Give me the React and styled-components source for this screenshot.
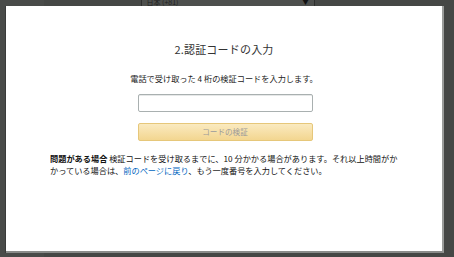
import React from "react";
import styled, { createGlobalStyle } from "styled-components";

const Global = createGlobalStyle`
  html, body { margin: 0; padding: 0; }
  body {
    background: #474947;
    overflow: hidden;
    font-family: "Noto Sans CJK JP", "Noto Sans", sans-serif;
  }
`;

const Screen = styled.div`
  position: relative;
  width: 454px;
  height: 257px;
  overflow: hidden;
  background: linear-gradient(to right, #494b49 0 44px, #454745 44px);
`;

const BehindPage = styled.div`
  display: flex;
  justify-content: center;
  padding-left: 1px;
`;

const FakeSelect = styled.div`
  width: 174px;
  height: 14px;
  margin-top: -7px;
  border: 1px solid #2e2f2e;
  border-top: none;
  background: #4d4f4d;
  display: flex;
  align-items: flex-end;
  justify-content: space-between;
  padding: 0 5px 0 5px;
  box-sizing: border-box;
  font-size: 7px;
  color: #222;
  line-height: 1;
`;

const Arrow = styled.span`
  font-size: 6px;
  color: #111;
  margin-bottom: 1px;
`;

const Modal = styled.div`
  position: absolute;
  left: 6px;
  top: 6px;
  width: 436px;
  height: 245px;
  background: #fff;
  border-right: 2px solid #9a9c9a;
  border-bottom: 2px solid #8a8c8a;
  box-shadow: -1px 0 0 #3a3b3a;
  display: flex;
  flex-direction: column;
  align-items: center;
  box-sizing: content-box;
`;

const Title = styled.h2`
  margin: 36px 0 0;
  font-size: 11px;
  font-weight: 400;
  color: #333;
  line-height: 14px;
  letter-spacing: 0.2px;
`;

const Sub = styled.p`
  margin: 17px 0 0;
  font-size: 8.2px;
  color: #222;
  line-height: 11px;
`;

const Input = styled.input`
  margin: 10px 0 0 2px;
  width: 175px;
  height: 18px;
  box-sizing: border-box;
  border: 1px solid #a9b0b0;
  border-radius: 2px;
  box-shadow: inset 0 1px 0 #e6e8e8;
  outline: none;
  background: #fff;
`;

const Button = styled.button`
  margin: 11px 0 0 2px;
  width: 175px;
  height: 18px;
  box-sizing: border-box;
  border: 1px solid #e6c77a;
  border-radius: 2px;
  background: linear-gradient(to bottom, #faeac0, #f3d690);
  color: #9b9b9b;
  font-family: "Noto Sans CJK JP", sans-serif;
  font-size: 7.6px;
  padding: 0;
  line-height: 16px;
`;

const Note = styled.p`
  margin: 11px 0 0;
  align-self: stretch;
  padding: 0 38px 0 44px;
  font-size: 8.2px;
  line-height: 12px;
  color: #111;
`;

const Strong = styled.b`
  font-weight: 700;
`;

const Link = styled.a`
  color: #0066c0;
  text-decoration: none;
`;

export default function App() {
  return (
    <>
      <Global />
      <Screen>
        <BehindPage>
          <FakeSelect>
            <span>日本 (+81)</span>
            <Arrow>▼</Arrow>
          </FakeSelect>
        </BehindPage>
        <Modal>
          <Title>2.認証コードの入力</Title>
          <Sub>電話で受け取った 4 桁の検証コードを入力します。</Sub>
          <Input type="text" />
          <Button type="button">コードの検証</Button>
          <Note>
            <Strong>問題がある場合</Strong> 検証コードを受け取るまでに、10 分かかる場合があります。それ以上時間がかかっている場合は、
            <Link href="#">前のページに戻り</Link>、もう一度番号を入力してください。
          </Note>
        </Modal>
      </Screen>
    </>
  );
}
